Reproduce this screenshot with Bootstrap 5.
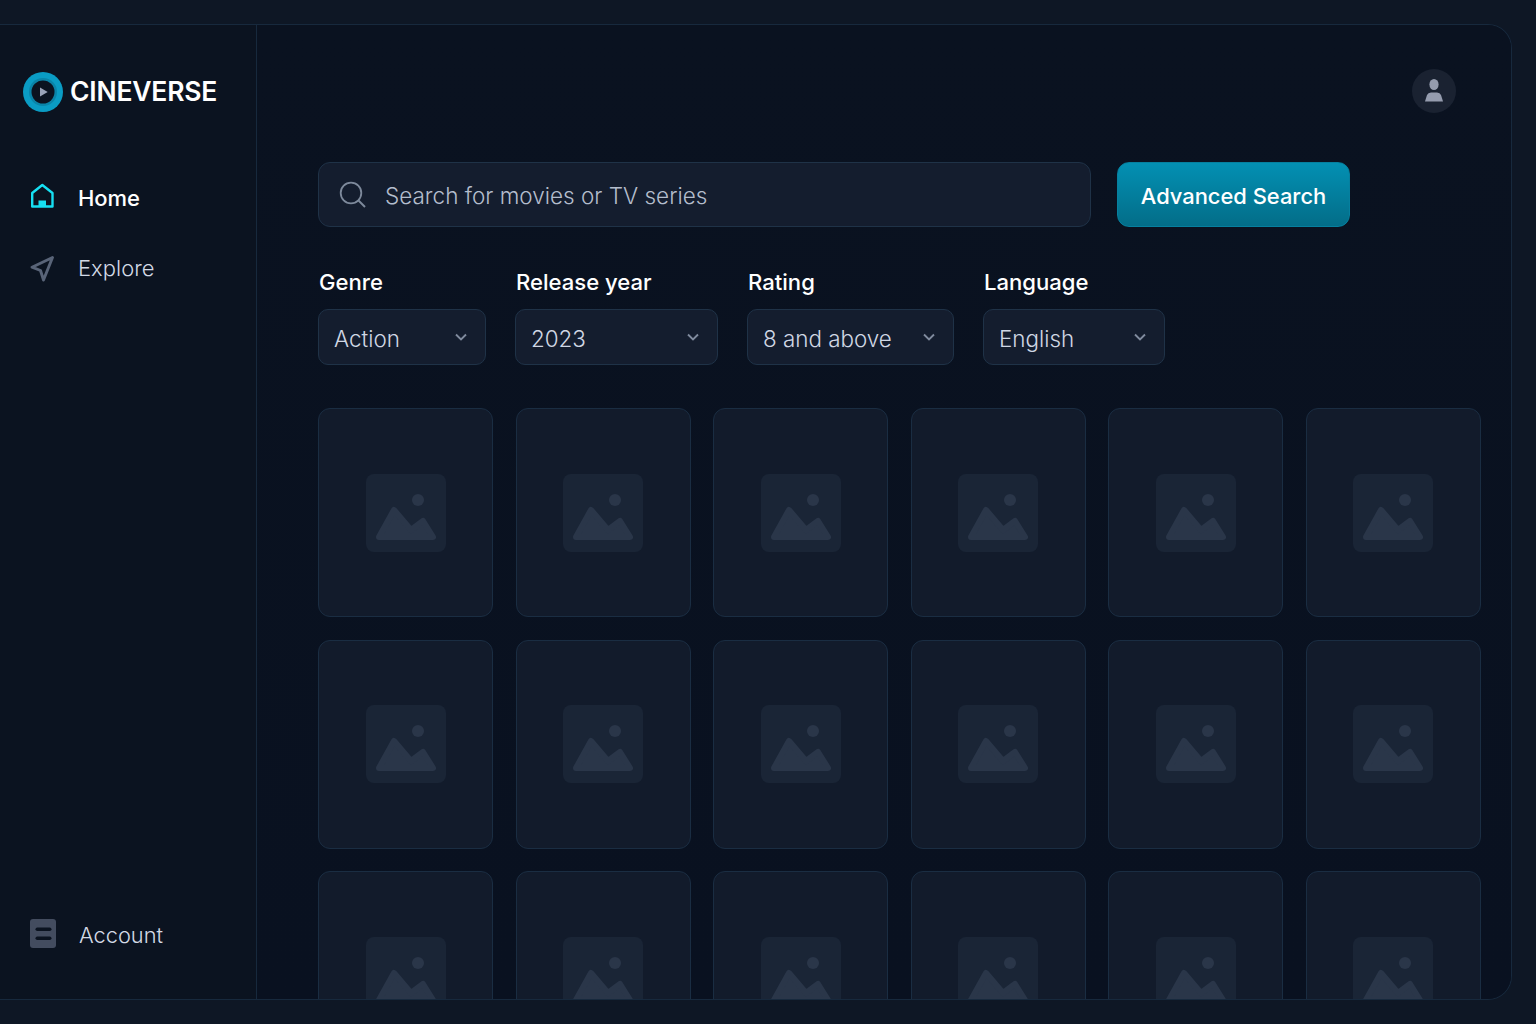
<!doctype html>
<html lang="en"><head><meta charset="utf-8"><title>Cineverse</title>
<link rel="stylesheet" href="https://cdn.jsdelivr.net/npm/bootstrap@5.3.0/dist/css/bootstrap.min.css">
<style>
html,body{height:100%;overflow:hidden}
body{background:#0e1725;font-family:Inter,"Liberation Sans",sans-serif;padding:24px 24px 24px 0}
.cv-frame{height:976px;background:#0a1220;border:1px solid #17293d;border-left:0;border-radius:0 24px 24px 0;overflow:hidden}
.cv-side{width:257px;flex:0 0 257px;border-right:1px solid #17293d;background:#0b1320;padding:47px 0 44px 23px}
.cv-logo{font-size:26.5px;font-weight:600;color:#fff;letter-spacing:-.2px;line-height:42px;gap:7px}
.cv-logo span{margin-top:-2px}
.cv-nav{margin-top:67px;gap:31px;padding-left:7px}
.cv-link{display:flex;align-items:center;font-size:22px;font-weight:300;line-height:39px;color:#d3dae6;text-decoration:none;gap:24px}
.cv-link.cv-on{color:#fff;font-weight:500;letter-spacing:-.1px}
.cv-link svg{flex:none}
.cv-home{margin-bottom:6px}
.cv-acc{margin-left:7px;margin-bottom:4px}
.cv-link.cv-last{font-size:21.8px;gap:23px}
.cv-main{flex:1;min-width:0;padding:44px 30px 0 61px;background:linear-gradient(180deg,#0a1220,#091120)}
.cv-avatar{width:44px;height:44px;border-radius:50%;background:#1a2231;margin-right:25px}
.cv-searchrow{margin-top:49px;gap:26px}
.cv-search{width:773px;height:65px;background:#141d2e;border:1px solid #1f3247;border-radius:12px;padding-left:20px;gap:19px}
.cv-search input{background:transparent;border:0;box-shadow:none;padding:3px 0 0;font-size:22.5px;font-weight:300;color:#b4bdcd;flex:1}
.cv-search input::placeholder{color:#b4bdcd;opacity:1}
.cv-search input:focus{background:transparent;box-shadow:none;color:#b4bdcd}
.cv-adv{width:233px;height:65px;background:linear-gradient(180deg,#0390b3,#036d88);border:1px solid #06809f;border-radius:12px;color:#fff;font-size:21.9px;font-weight:500;padding:3px 0 0}
.cv-filters{margin-top:41px;gap:29px}
.cv-label{display:block;margin:0 0 12px 1px;font-size:22.1px;line-height:29px;color:#fff;font-weight:500}
.cv-select{height:56px;background-color:#141d2e;border:1px solid #1f3247;border-radius:10px;padding:4px 40px 0 15px;font-size:22.4px;font-weight:300;color:#d0d7e4;background-image:url("data:image/svg+xml,%3Csvg xmlns='http://www.w3.org/2000/svg' viewBox='0 0 14 10'%3E%3Cpath d='M2 2.5 7 7.5 12 2.5' fill='none' stroke='%237f8a9d' stroke-width='1.9'/%3E%3C/svg%3E");background-size:14px 10px;background-position:right 17px center}
.cv-w1{width:168px}.cv-w2{width:203px}.cv-w3{width:207px}.cv-w4{width:182px}
.cv-grid{display:grid;grid-template-columns:repeat(6,1fr);gap:22.5px 22.4px;margin-top:43px}
.cv-poster{height:209px;background:#121b2b;border:1px solid #1a2d42;border-radius:12px}
.cv-thumb{width:80px;height:78px;background:#1a2536;border-radius:8px}
</style></head>
<body>
<div class="cv-frame d-flex">
<aside class="cv-side d-flex flex-column">
  <div class="cv-logo d-flex align-items-center">
    <svg width="40" height="40" viewBox="0 0 40 40"><circle cx="20" cy="20" r="20" fill="#0a9cc4"/><circle cx="20" cy="20" r="14" fill="#0a84a8"/><circle cx="20" cy="20" r="11.5" fill="#0b1320"/><path d="M17 15.5 24.7 20 17 24.5Z" fill="#9aa3b8"/></svg>
    <span>CINEVERSE</span>
  </div>
  <nav class="cv-nav d-flex flex-column">
    <a class="cv-link cv-on" href="#"><svg class="cv-home" width="24" height="26" viewBox="0 0 24 26"><path d="M2.2 23.5V10L12.3 2 22.5 10V23.5Z" fill="none" stroke="#16dff2" stroke-width="2.4" stroke-linejoin="round"/><path d="M8.5 17.5H16V23.5H8.5Z" fill="#16dff2"/></svg>Home</a>
    <a class="cv-link" href="#"><svg width="24" height="26" viewBox="0 0 24 26"><path d="M22.5 1.5 2 11.2 10.5 14.5 13.5 24Z" fill="none" stroke="#596478" stroke-width="2.9" stroke-linejoin="round"/></svg>Explore</a>
  </nav>
  <a class="cv-link cv-last mt-auto" href="#"><svg class="cv-acc" width="26" height="29" viewBox="0 0 26 29"><rect width="26" height="29" rx="3" fill="#434c5f"/><rect x="5.5" y="8.5" width="16" height="3.6" rx="1.8" fill="#0b1320"/><rect x="5.5" y="17.5" width="16" height="3.6" rx="1.8" fill="#0b1320"/></svg>Account</a>
</aside>
<main class="cv-main">
  <div class="d-flex justify-content-end">
    <div class="cv-avatar d-flex align-items-center justify-content-center">
      <svg width="20" height="26" viewBox="0 0 20 26"><ellipse cx="10" cy="6.5" rx="4.6" ry="5.6" fill="#959cae"/><path d="M1 23.5 3 17Q4 14.5 7 14.5H13Q16 14.5 17 17L19 23.5Z" fill="#959cae"/></svg>
    </div>
  </div>
  <div class="cv-searchrow d-flex">
    <div class="cv-search d-flex align-items-center">
      <svg width="27" height="27" viewBox="0 0 27 27" class="flex-shrink-0"><circle cx="12" cy="12" r="10.3" fill="none" stroke="#7d899b" stroke-width="1.8"/><path d="M19.5 19.5 26 26" stroke="#7d899b" stroke-width="1.9"/></svg>
      <input class="form-control" type="text" placeholder="Search for movies or TV series">
    </div>
    <button class="btn cv-adv" type="button">Advanced Search</button>
  </div>
  <div class="cv-filters d-flex">
    <div class="cv-w1"><label class="cv-label">Genre</label><select class="form-select cv-select"><option>Action</option></select></div>
    <div class="cv-w2"><label class="cv-label">Release year</label><select class="form-select cv-select"><option>2023</option></select></div>
    <div class="cv-w3"><label class="cv-label">Rating</label><select class="form-select cv-select"><option>8 and above</option></select></div>
    <div class="cv-w4"><label class="cv-label">Language</label><select class="form-select cv-select"><option>English</option></select></div>
  </div>
  <div class="cv-grid" id="cvgrid"></div>
</main>
</div>
<script>
var g=document.getElementById('cvgrid'),h='';
for(var i=0;i<18;i++){h+='<div class="cv-poster d-flex align-items-center justify-content-center"><div class="cv-thumb"><svg width="80" height="78" viewBox="0 0 80 78"><circle cx="52" cy="26" r="6" fill="#2a3649"/><path d="M13 63 28 36 45 56 57 47 67 63Z" fill="#2a3649" stroke="#2a3649" stroke-width="6" stroke-linejoin="round"/></svg></div></div>';}
g.innerHTML=h;
</script>
<script src="https://cdn.jsdelivr.net/npm/bootstrap@5.3.0/dist/js/bootstrap.bundle.min.js"></script>
</body></html>
